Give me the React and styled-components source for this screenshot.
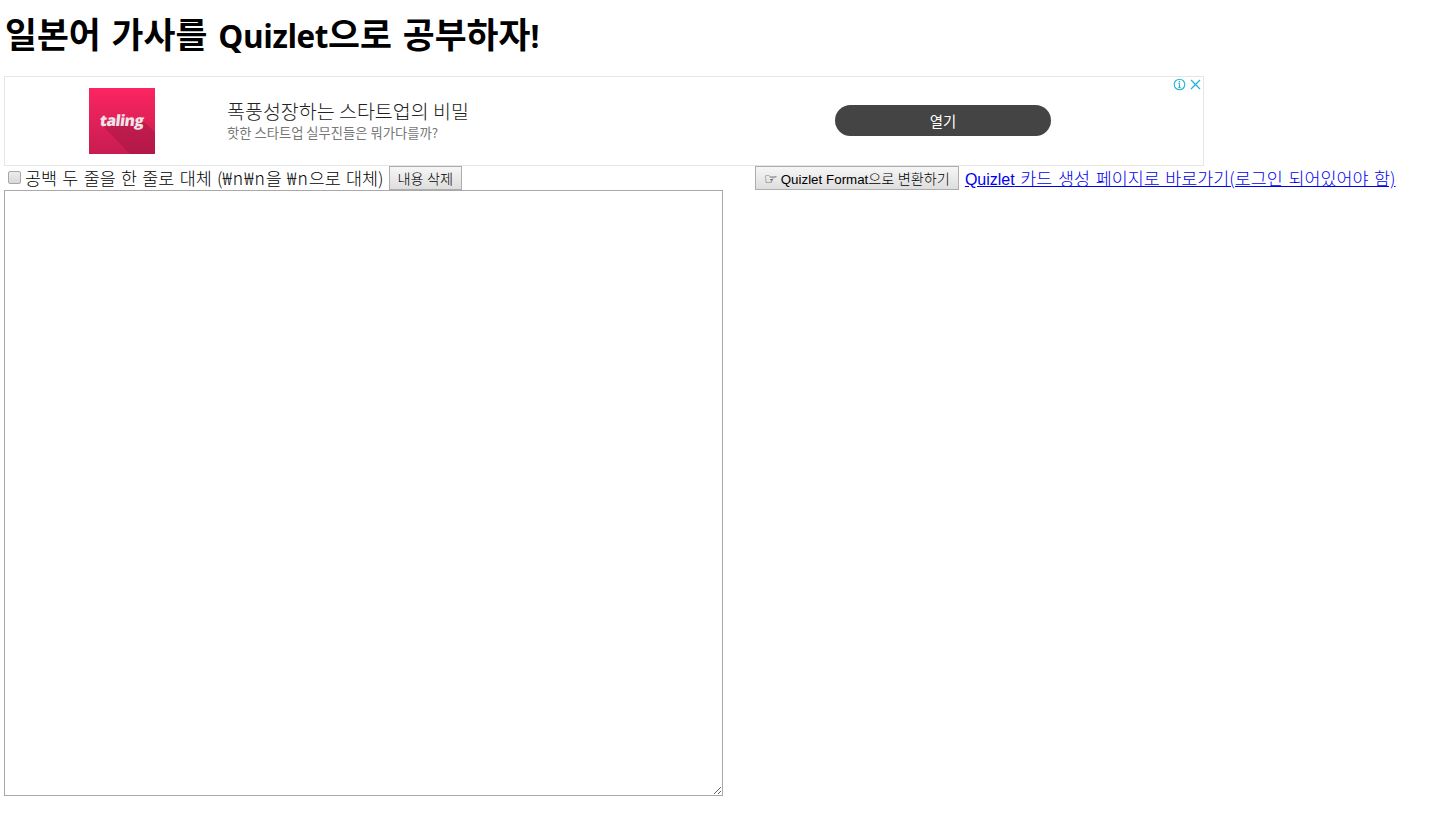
import React from "react";
import styled, { createGlobalStyle } from "styled-components";

const Global = createGlobalStyle`
  html, body { margin: 0; padding: 0; background: #fff; }
  body { font-family: "Noto Sans CJK KR", "Liberation Sans", sans-serif; font-size: 16px; color: #000; }
`;

const Page = styled.div`
  padding: 0 4px;
  height: 829px;
  box-sizing: border-box;
  overflow: hidden;
`;

const Title = styled.h1`
  margin: 0;
  padding: 10px 1px 0;
  height: 76px;
  box-sizing: border-box;
  font-family: "Noto Sans CJK KR", sans-serif;
  font-size: 34.7px;
  line-height: 46px;
  font-weight: 700;
  word-spacing: 3px;
  white-space: nowrap;
`;

const TitleLatin = styled.span`
  font-family: "Open Sans", sans-serif;
  font-size: 31.5px;
  font-weight: 700;
  letter-spacing: -0.4px;
`;

const Ad = styled.div`
  position: relative;
  box-sizing: border-box;
  width: 1200px;
  height: 90px;
  border: 1px solid #e6e6e6;
  display: flex;
  align-items: center;
  font-family: "Noto Sans CJK KR", sans-serif;
`;

const Logo = styled.div`
  flex: none;
  position: relative;
  overflow: hidden;
  margin-left: 84px;
  width: 66px;
  height: 66px;
  display: flex;
  align-items: center;
  justify-content: center;
  background: linear-gradient(180deg, #fb2561 0%, #dc2057 60%, #c81c50 100%);
`;

const LogoShadow = styled.span`
  position: absolute;
  inset: 0;
  background: rgba(130, 15, 55, 0.3);
  clip-path: polygon(12px 36px, 30px 31px, 55px 34px, 66px 44px, 66px 66px, 41px 66px);
`;

const LogoText = styled.span`
  position: relative;
  margin-bottom: 3px;
  color: #efe4e8;
  font-family: "Open Sans", sans-serif;
  font-size: 15.5px;
  font-weight: 800;
  letter-spacing: -0.5px;
  transform: skewX(-7deg);
`;

const AdCopy = styled.div`
  flex: none;
  margin-left: 72px;
  margin-top: -4px;
  width: 520px;
  display: flex;
  flex-direction: column;
`;

const AdHeadline = styled.div`
  font-size: 19.5px;
  line-height: 26px;
  font-weight: 300;
  color: #222;
`;

const AdSub = styled.div`
  font-size: 13.3px;
  line-height: 17px;
  font-weight: 400;
  color: #777;
`;

const OpenButton = styled.div`
  flex: none;
  margin: -2px 0 0 88px;
  width: 216px;
  height: 31px;
  border-radius: 16px;
  background: #444;
  color: #fff;
  font-size: 14.4px;
  display: flex;
  align-items: center;
  justify-content: center;
`;

const AdBadge = styled.div`
  position: absolute;
  top: 1px;
  right: 2px;
  display: flex;
  gap: 4px;
  align-items: center;
`;

const Toolbar = styled.div`
  display: flex;
  align-items: flex-start;
  height: 24px;
`;

const Left = styled.div`
  width: 751px;
  flex: none;
  display: flex;
  align-items: flex-start;
`;

const Right = styled.div`
  display: flex;
  align-items: flex-start;
`;

const Check = styled.input`
  appearance: none;
  box-sizing: border-box;
  flex: none;
  width: 13px;
  height: 13px;
  margin: 5px 4px 0 4px;
  border: 1px solid #a8a8a8;
  border-radius: 2px;
  background: linear-gradient(#ececec, #d9d9d9);
`;

const Label = styled.span`
  line-height: 24px;
  font-size: 17.4px;
  font-weight: 300;
  margin-right: 5px;
  white-space: nowrap;
  word-spacing: 1.5px;
`;

const Won = styled.span`
  letter-spacing: 1px;
`;

const Btn = styled.button`
  box-sizing: border-box;
  flex: none;
  height: 24px;
  padding: 0 8px;
  border: 1px solid #adadad;
  border-radius: 0;
  background: linear-gradient(#f6f6f6, #dedede);
  font-family: "Noto Sans CJK KR", sans-serif;
  font-size: 14.2px;
  font-weight: 300;
  line-height: 22px;
  color: #000;
  white-space: nowrap;
  word-spacing: 0.15px;
`;

const BtnLatin = styled.span`
  font-family: "Liberation Sans", sans-serif;
  font-size: 13.33px;
  font-weight: 400;
`;

const Hand = styled.span`
  font-family: "DejaVu Sans", sans-serif;
  font-size: 15px;
  font-weight: 400;
`;

const LinkOut = styled.a`
  margin-left: 6px;
  line-height: 24px;
  color: #00e;
  font-size: 17.4px;
  font-weight: 300;
  white-space: nowrap;
  word-spacing: 1.8px;
`;

const LinkLatin = styled.span`
  font-family: "Liberation Sans", sans-serif;
  font-size: 16px;
  font-weight: 400;
`;

const Area = styled.textarea`
  display: block;
  box-sizing: border-box;
  width: 719px;
  height: 606px;
  margin: 0;
  border: 1px solid #a9a9a9;
  padding: 2px;
  outline: none;
`;

export default function App() {
  return (
    <Page>
      <Global />
      <Title>일본어 가사를 <TitleLatin>Quizlet</TitleLatin>으로 공부하자<TitleLatin>!</TitleLatin></Title>
      <Ad>
        <Logo>
          <LogoShadow />
          <LogoText>taling</LogoText>
        </Logo>
        <AdCopy>
          <AdHeadline>폭풍성장하는 스타트업의 비밀</AdHeadline>
          <AdSub>핫한 스타트업 실무진들은 뭐가다를까?</AdSub>
        </AdCopy>
        <OpenButton>열기</OpenButton>
        <AdBadge>
          <svg width="13" height="13" viewBox="0 0 13 13" fill="none" stroke="#23b5d3">
            <circle cx="6.5" cy="6.5" r="5.3" strokeWidth="1.1" />
            <path d="M6.5 5.4v4.2M5.3 9.6h2.4M5.4 5.4h1.1" strokeWidth="1.2" />
            <path d="M6.5 3v1.4" strokeWidth="1.3" />
          </svg>
          <svg width="11" height="11" viewBox="0 0 11 11" fill="none" stroke="#23b5d3" strokeWidth="1.3">
            <path d="M1 1l9 9M10 1l-9 9" />
          </svg>
        </AdBadge>
      </Ad>
      <Toolbar>
        <Left>
          <Check type="checkbox" />
          <Label>공백 두 줄을 한 줄로 대체 (<Won>₩n₩n</Won>을 <Won>₩n</Won>으로 대체)</Label>
          <Btn>내용 삭제</Btn>
        </Left>
        <Right>
          <Btn><Hand>☞</Hand> <BtnLatin>Quizlet Format</BtnLatin>으로 변환하기</Btn>
          <LinkOut href="#"><LinkLatin>Quizlet</LinkLatin> 카드 생성 페이지로 바로가기(로그인 되어있어야 함)</LinkOut>
        </Right>
      </Toolbar>
      <Area />
    </Page>
  );
}
